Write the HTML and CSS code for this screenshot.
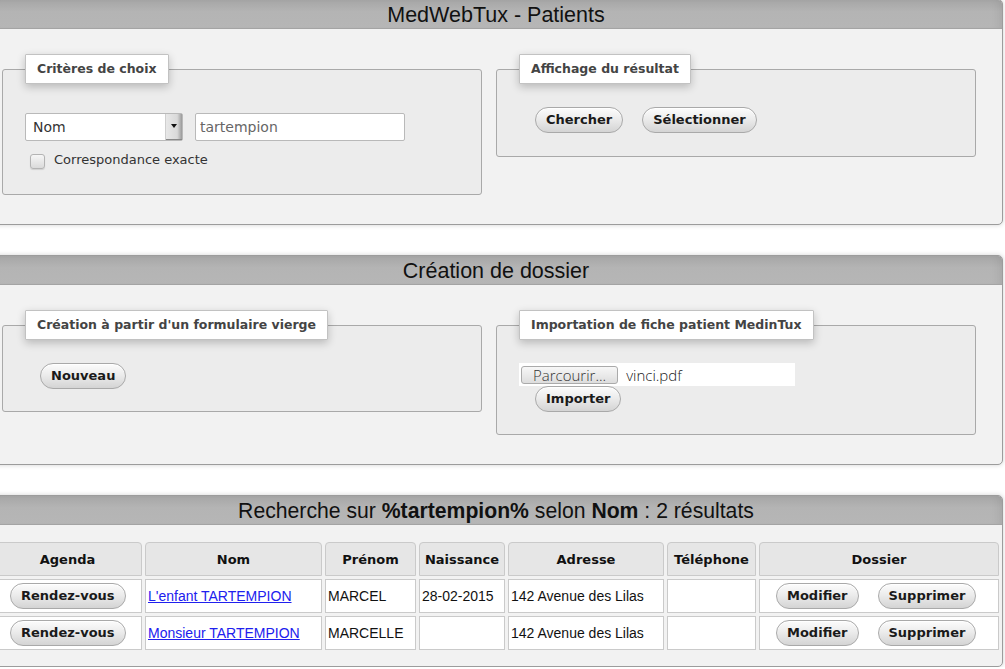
FILE: index.html
```html
<!DOCTYPE html>
<html lang="fr">
<head>
<meta charset="utf-8">
<title>MedWebTux - Patients</title>
<link rel="stylesheet" href="styles.css">
</head>
<body>
<div class="page">
  <section class="panel panel-first">
    <h1 class="panel-head">MedWebTux - Patients</h1>
    <div class="panel-body">
      <div class="row">
        <fieldset class="box box-criteria">
          <legend>Critères de choix</legend>
          <div class="search-line">
            <div class="select"><span class="select-text">Nom</span><span class="select-arrow"></span></div>
            <div class="text-input">tartempion</div>
          </div>
          <label class="check-line"><span class="checkbox"></span><span>Correspondance exacte</span></label>
        </fieldset>
        <fieldset class="box box-result">
          <legend>Affichage du résultat</legend>
          <div class="btn-line">
            <button class="btn">Chercher</button>
            <button class="btn">Sélectionner</button>
          </div>
        </fieldset>
      </div>
    </div>
  </section>

  <section class="panel">
    <h1 class="panel-head">Création de dossier</h1>
    <div class="panel-body">
      <div class="row">
        <fieldset class="box box-new">
          <legend>Création à partir d'un formulaire vierge</legend>
          <div class="btn-line">
            <button class="btn">Nouveau</button>
          </div>
        </fieldset>
        <fieldset class="box box-import">
          <legend>Importation de fiche patient MedinTux</legend>
          <div class="file-input"><span class="file-btn">Parcourir...</span><span class="file-name">vinci.pdf</span></div>
          <div class="btn-line btn-line-tight">
            <button class="btn">Importer</button>
          </div>
        </fieldset>
      </div>
    </div>
  </section>

  <section class="panel">
    <h1 class="panel-head panel-head-results">Recherche sur <b>%tartempion%</b> selon <b>Nom</b> : 2 résultats</h1>
    <div class="panel-body panel-body-table">
      <table class="results">
        <thead>
          <tr>
            <th class="c-agenda">Agenda</th>
            <th class="c-nom">Nom</th>
            <th class="c-prenom">Prénom</th>
            <th class="c-naiss">Naissance</th>
            <th class="c-adr">Adresse</th>
            <th class="c-tel">Téléphone</th>
            <th class="c-dossier">Dossier</th>
          </tr>
        </thead>
        <tbody>
          <tr>
            <td class="cell-btn"><button class="btn">Rendez-vous</button></td>
            <td><a href="#">L'enfant TARTEMPION</a></td>
            <td>MARCEL</td>
            <td>28-02-2015</td>
            <td>142 Avenue des Lilas</td>
            <td></td>
            <td class="cell-btn"><button class="btn">Modifier</button><button class="btn">Supprimer</button></td>
          </tr>
          <tr>
            <td class="cell-btn"><button class="btn">Rendez-vous</button></td>
            <td><a href="#">Monsieur TARTEMPION</a></td>
            <td>MARCELLE</td>
            <td></td>
            <td>142 Avenue des Lilas</td>
            <td></td>
            <td class="cell-btn"><button class="btn">Modifier</button><button class="btn">Supprimer</button></td>
          </tr>
        </tbody>
      </table>
    </div>
  </section>
</div>
</body>
</html>
```

FILE: styles.css
```css
html, body {
  margin: 0;
  padding: 0;
  background: #ffffff;
}
body {
  font-family: "DejaVu Sans", Verdana, sans-serif;
  font-size: 13px;
  color: #222;
  overflow: hidden;
}
.page {
  display: flex;
  flex-direction: column;
  gap: 30px;
}
.panel {
  margin-left: -11px;
  width: 1014px;
  box-sizing: border-box;
  border: 1px solid #9c9c9c;
  border-radius: 5px;
  background: #f2f2f2;
  box-shadow: 0 0 5px rgba(0, 0, 0, 0.18);
  overflow: hidden;
}
.panel-first {
  margin-top: -1px;
}
.panel-head {
  margin: 0;
  height: 29px;
  line-height: 30px;
  text-align: center;
  font-family: "Liberation Sans", Arial, sans-serif;
  font-size: 21.5px;
  font-weight: normal;
  color: #111;
  background: linear-gradient(#a6a6a6, #b4b4b4 40%, #b6b6b6);
  box-shadow: inset 0 -1px 0 #a4a4a4, inset 8px 0 10px -6px rgba(0,0,0,0.08), inset -8px 0 10px -6px rgba(0,0,0,0.08);
  overflow: hidden;
  white-space: nowrap;
}
.panel-head-results {
  font-size: 21.2px;
}
.panel-head b {
  font-weight: bold;
}
.panel-body {
  padding: 25px 12px 29px;
}
.panel-body-table {
  padding: 14px 0 13px;
}
.row {
  display: flex;
  align-items: flex-start;
  gap: 14px;
}
.box {
  margin: 0;
  width: 480px;
  box-sizing: border-box;
  min-width: 0;
  border: 1px solid #a9a9a9;
  border-radius: 3px;
  background: #ececec;
  padding: 0 22px;
}
.box legend {
  height: 30px;
  box-sizing: border-box;
  padding: 6px 11px;
  line-height: 16px;
  background: #ffffff;
  border: 1px solid #c2c2c2;
  border-radius: 1px;
  box-shadow: 0 3px 9px rgba(0, 0, 0, 0.22);
  font-weight: bold;
  font-size: 12.5px;
  color: #444;
  white-space: nowrap;
}
.box-criteria {
  padding-top: 29px;
  padding-bottom: 26px;
}
.box-result {
  padding-top: 23px;
  padding-bottom: 23px;
}
.box-new {
  padding-top: 23px;
  padding-bottom: 22px;
}
.box-import {
  padding-top: 23px;
  padding-bottom: 22px;
}
.search-line {
  display: flex;
  align-items: center;
  gap: 12px;
}
.select {
  width: 158px;
  height: 28px;
  box-sizing: border-box;
  border: 1px solid #b9b9b9;
  border-radius: 2px;
  background: #fff;
  display: flex;
  align-items: stretch;
  font-size: 14px;
  color: #333;
}
.select-text {
  flex: 1;
  padding-left: 7px;
  line-height: 26px;
}
.select-arrow {
  width: 16px;
  position: relative;
  background: linear-gradient(90deg, #e8e8e8, #d9d9d9 70%, #9a9a9a);
  border-left: 1px solid #cfcfcf;
  box-shadow: inset 0 -1px 0 #888;
}
.select-arrow::after {
  content: "";
  position: absolute;
  left: 5px;
  top: 10px;
  border-left: 3px solid transparent;
  border-right: 3px solid transparent;
  border-top: 4px solid #111;
}
.text-input {
  width: 210px;
  height: 28px;
  box-sizing: border-box;
  border: 1px solid #b9b9b9;
  border-radius: 2px;
  background: #fff;
  padding-left: 4px;
  line-height: 26px;
  font-size: 14px;
  color: #666;
}
.check-line {
  display: flex;
  align-items: center;
  gap: 9px;
  margin-top: 10px;
  height: 17px;
  color: #333;
}
.checkbox {
  width: 15px;
  height: 15px;
  box-sizing: border-box;
  margin-left: 5px;
  margin-top: 3px;
  border: 1px solid #b3b3b3;
  border-radius: 3px;
  background: linear-gradient(#f6f6f6, #dadada);
  box-shadow: 0 1px 1px rgba(0,0,0,0.12);
}
.btn-line {
  display: flex;
  gap: 19px;
  padding-left: 16px;
}
.box-new .btn-line {
  padding-left: 15px;
}
.btn {
  height: 26px;
  box-sizing: border-box;
  margin: 0;
  padding: 0 10px;
  border: 1px solid #a9a9a9;
  border-radius: 13px;
  background: linear-gradient(#fcfcfc, #ececec 45%, #d4d4d4);
  box-shadow: inset 0 1px 0 #fff;
  font-family: "DejaVu Sans", Verdana, sans-serif;
  font-size: 13px;
  font-weight: bold;
  color: #1a1a1a;
  line-height: 24px;
  cursor: pointer;
}
.file-input {
  width: 276px;
  height: 23px;
  box-sizing: border-box;
  background: #fff;
  display: flex;
  align-items: center;
  padding-left: 2px;
  font-family: "Open Sans", sans-serif;
  font-weight: 300;
  font-size: 15px;
  color: #222;
}
.file-btn {
  height: 18px;
  box-sizing: border-box;
  padding: 0 11px 0 11px;
  border: 1px solid #aaa;
  border-radius: 3px;
  background: linear-gradient(#f7f7f7, #dddddd);
  line-height: 16px;
  color: #333;
}
.file-name {
  margin-left: 8px;
}
.results {
  width: 1012px;
  table-layout: fixed;
  border-collapse: separate;
  border-spacing: 3px;
}
.results th,
.results td {
  box-sizing: border-box;
  height: 34px;
  border: 1px solid #cacaca;
  padding: 0 2px;
  vertical-align: middle;
}
.results th {
  background: #e6e6e6;
  border-radius: 4px 4px 0 0;
  font-family: "DejaVu Sans", Verdana, sans-serif;
  font-size: 13px;
  font-weight: bold;
  color: #111;
  text-align: center;
}
.results td {
  background: #fff;
  font-family: "Liberation Sans", Arial, sans-serif;
  font-size: 14px;
  color: #111;
  white-space: nowrap;
}
.results td a {
  color: #2020ee;
}
.results td.cell-btn {
  padding-left: 16px;
}
.results td.cell-btn .btn + .btn {
  margin-left: 19px;
}
.c-agenda { width: 149px; }
.c-nom { width: 177px; }
.c-prenom { width: 91px; }
.c-naiss { width: 86px; }
.c-adr { width: 156px; }
.c-tel { width: 89px; }
.c-dossier { width: 240px; }
```
